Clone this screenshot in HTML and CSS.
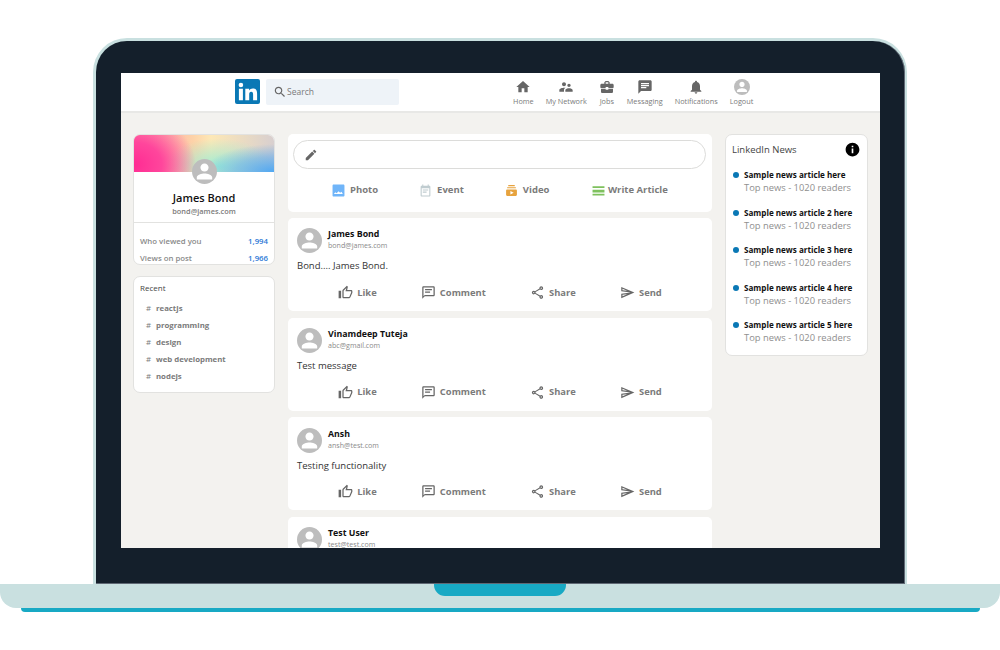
FILE: index.html
```html
<!DOCTYPE html>
<html lang="en">
<head>
<meta charset="utf-8">
<title>LinkedIn clone</title>
<link rel="stylesheet" href="styles.css">
</head>
<body>
<svg class="defs" width="0" height="0" aria-hidden="true">
  <symbol id="i-home" viewBox="0 0 24 24"><path d="M10 20v-6h4v6h5v-8h3L12 3 2 12h3v8z"/></symbol>
  <symbol id="i-net" viewBox="0 0 24 24"><path d="M16.5 12c1.38 0 2.49-1.12 2.49-2.5S17.88 7 16.5 7 14 8.12 14 9.5s1.12 2.5 2.5 2.5zM9 11c1.66 0 2.99-1.34 2.99-3S10.66 5 9 5 6 6.34 6 8s1.34 3 3 3zm7.5 3c-1.83 0-5.5.92-5.5 2.75V19h11v-2.25c0-1.83-3.67-2.75-5.5-2.75zM9 13c-2.33 0-7 1.17-7 3.5V19h7v-2.25c0-.85.33-2.34 2.37-3.47C10.5 13.1 9.66 13 9 13z"/></symbol>
  <symbol id="i-jobs" viewBox="0 0 24 24"><path d="M10 16v-1H3.01L3 19c0 1.11.89 2 2 2h14c1.11 0 2-.89 2-2v-4h-7v1h-4zm10-9h-4.01V5l-2-2h-4l-2 2v2H4c-1.1 0-2 .9-2 2v3c0 1.11.89 2 2 2h6v-2h4v2h6c1.1 0 2-.9 2-2V9c0-1.1-.9-2-2-2zm-6 0h-4V5h4v2z"/></symbol>
  <symbol id="i-chat" viewBox="0 0 24 24"><path d="M20 2H4c-1.1 0-1.99.9-1.99 2L2 22l4-4h14c1.1 0 2-.9 2-2V4c0-1.1-.9-2-2-2zM6 9h12v2H6V9zm8 5H6v-2h8v2zm4-6H6V6h12v2z"/></symbol>
  <symbol id="i-bell" viewBox="0 0 24 24"><path d="M12 22c1.1 0 2-.9 2-2h-4c0 1.1.89 2 2 2zm6-6v-5c0-3.07-1.64-5.64-4.5-6.32V4c0-.83-.67-1.5-1.5-1.5s-1.5.67-1.5 1.5v.68C7.63 5.36 6 7.92 6 11v5l-2 2v1h16v-1l-2-2z"/></symbol>
  <symbol id="i-avatar" viewBox="0 0 24 24"><circle cx="12" cy="12" r="12" fill="#bdbdbd"/><path fill="#fff" d="M12 12c2.21 0 3.9-1.7 3.9-3.9S14.2 4.2 12 4.2 8.1 5.9 8.1 8.1 9.8 12 12 12zm0 1.9c-2.6 0-7.4 1.3-7.4 3.6V19.6h14.8v-2.1c0-2.3-4.8-3.6-7.4-3.6z"/></symbol>
  <symbol id="i-search" viewBox="0 0 24 24"><path d="M15.5 14h-.79l-.28-.27C15.41 12.59 16 11.11 16 9.5 16 5.91 13.09 3 9.5 3S3 5.91 3 9.5 5.91 16 9.5 16c1.61 0 3.09-.59 4.23-1.57l.27.28v.79l5 4.99L20.49 19l-4.99-5zm-6 0C7.01 14 5 11.99 5 9.5S7.01 5 9.5 5 14 7.01 14 9.5 11.99 14 9.5 14z"/></symbol>
  <symbol id="i-pen" viewBox="0 0 24 24"><path d="M3 17.25V21h3.75L17.81 9.94l-3.75-3.75L3 17.25zM20.71 7.04c.39-.39.39-1.02 0-1.41l-2.34-2.34c-.39-.39-1.02-.39-1.41 0l-1.83 1.83 3.75 3.75 1.83-1.83z"/></symbol>
  <symbol id="i-photo" viewBox="0 0 24 24"><path d="M23 21V3c0-1.100-.9-2-2-2H3C1.900 1 1 1.900 1 3v18c0 1.100.9 2 2 2h18c1.100 0 2-.9 2-2zM6 15l2.500 2 3.500-3.500 3 2.500 2.500-1.500 2.500 4H3.500z"/></symbol>
  <symbol id="i-event" viewBox="0 0 24 24"><path d="M17 10H7v2h10v-2zm2-7h-1V1h-2v2H8V1H6v2H5c-1.11 0-1.99.9-1.99 2L3 21c0 1.100.89 2 2 2h14c1.100 0 2-.9 2-2V5c0-1.100-.9-2-2-2zm0 18H5V8h14v13zm-5-7H7v2h7v-2z"/></symbol>
  <symbol id="i-video" viewBox="0 0 24 24"><path d="M20 8H4V6h16v2zm-2-6H6v2h12V2zm4 10v8c0 1.100-.9 2-2 2H4c-1.100 0-2-.9-2-2v-8c0-1.100.9-2 2-2h16c1.100 0 2 .9 2 2zm-6 4l-6-3.270v6.530L16 16z"/></symbol>
  <symbol id="i-article" viewBox="0 0 24 24"><path d="M1 18h22v3H1zm0-7.500h22v5H1zM1 4h22v3.500H1z"/></symbol>
  <symbol id="i-like" viewBox="0 0 24 24"><path d="M9 21h9c.83 0 1.54-.5 1.84-1.22l3.02-7.05c.09-.23.14-.47.14-.73v-2c0-1.1-.9-2-2-2h-6.31l.95-4.57.03-.32c0-.41-.17-.79-.44-1.06L14.17 1 7.58 7.59C7.22 7.95 7 8.45 7 9v10c0 1.1.9 2 2 2zM9 9l4.34-4.34L12 10h9v2l-3 7H9V9zM1 9h4v12H1z"/></symbol>
  <symbol id="i-comment" viewBox="0 0 24 24"><path d="M20 2H4c-1.1 0-2 .9-2 2v18l4-4h14c1.1 0 2-.9 2-2V4c0-1.1-.9-2-2-2zm0 14H6l-2 2V4h16v12zM6.500 6.500h11v2h-11zm0 4h8v2h-8z"/></symbol>
  <symbol id="i-share" viewBox="0 0 24 24"><path d="M18 16.08c-.76 0-1.44.3-1.96.77L8.91 12.7c.05-.23.09-.46.09-.7s-.04-.47-.09-.7l7.05-4.11c.54.5 1.25.81 2.04.81 1.66 0 3-1.34 3-3s-1.34-3-3-3-3 1.34-3 3c0 .24.04.47.09.7L8.04 9.81C7.5 9.31 6.79 9 6 9c-1.66 0-3 1.34-3 3s1.34 3 3 3c.79 0 1.5-.31 2.04-.81l7.12 4.16c-.05.21-.08.43-.08.65 0 1.61 1.31 2.92 2.92 2.92s2.92-1.31 2.92-2.92-1.31-2.92-2.92-2.92zM18 4c.55 0 1 .45 1 1s-.45 1-1 1-1-.45-1-1 .45-1 1-1zM6 13c-.55 0-1-.45-1-1s.45-1 1-1 1 .45 1 1-.45 1-1 1zm12 7.020c-.55 0-1-.45-1-1s.45-1 1-1 1 .45 1 1-.45 1-1 1z"/></symbol>
  <symbol id="i-send" viewBox="0 0 24 24"><path d="M4.010 6.030l7.510 3.220-7.520-1 .01-2.220m7.500 8.720L4 17.970v-2.220l7.510-1M2.010 3L2 10l15 2-15 2 .01 7L23 12 2.010 3z"/></symbol>
  <symbol id="i-info" viewBox="0 0 24 24"><path d="M12 1C5.930 1 1 5.930 1 12s4.930 11 11 11 11-4.930 11-11S18.070 1 12 1zm1.300 17h-2.600v-7.500h2.600V18zm0-9.500h-2.600V6h2.600v2.500z"/></symbol>
</svg>

<div class="stage">
  <div class="lid">
    <div class="screen">
      <header class="topbar">
        <svg class="logo" viewBox="0 0 25 25" aria-label="LinkedIn">
          <rect width="25" height="25" rx="2" fill="#0a78b5"/>
          <circle cx="5.900" cy="6" r="2.300" fill="#fff"/>
          <path fill="#fff" d="M3.900 9.800h4v11.400h-4zM10.300 9.800h3.800v1.600c.7-1.100 2-1.900 3.700-1.900 3.300 0 4.300 2.100 4.300 5.200v6.500h-4v-5.700c0-1.500-.4-2.700-1.900-2.700s-2 1.100-2 2.700v5.700h-3.900z"/>
        </svg>
        <div class="search">
          <svg class="search-icon"><use href="#i-search"/></svg>
          <span>Search</span>
        </div>
        <nav class="nav">
          <a class="nav-item"><svg class="nav-icon"><use href="#i-home"/></svg><span>Home</span></a>
          <a class="nav-item"><svg class="nav-icon"><use href="#i-net"/></svg><span>My Network</span></a>
          <a class="nav-item"><svg class="nav-icon"><use href="#i-jobs"/></svg><span>Jobs</span></a>
          <a class="nav-item"><svg class="nav-icon"><use href="#i-chat"/></svg><span>Messaging</span></a>
          <a class="nav-item"><svg class="nav-icon"><use href="#i-bell"/></svg><span>Notifications</span></a>
          <a class="nav-item"><svg class="nav-icon"><use href="#i-avatar"/></svg><span>Logout</span></a>
        </nav>
      </header>

      <div class="content">
        <aside class="left">
          <section class="card profile">
            <div class="banner"></div>
            <svg class="profile-avatar"><use href="#i-avatar"/></svg>
            <h2 class="profile-name">James Bond</h2>
            <p class="profile-mail">bond@james.com</p>
            <div class="stats">
              <div class="stat"><span>Who viewed you</span><b>1,994</b></div>
              <div class="stat"><span>Views on post</span><b>1,966</b></div>
            </div>
          </section>
          <section class="card recent">
            <p class="recent-title">Recent</p>
            <div class="tag"><i>#</i><span>reactjs</span></div>
            <div class="tag"><i>#</i><span>programming</span></div>
            <div class="tag"><i>#</i><span>design</span></div>
            <div class="tag"><i>#</i><span>web development</span></div>
            <div class="tag"><i>#</i><span>nodejs</span></div>
          </section>
        </aside>

        <main class="feed">
          <section class="panel composer">
            <div class="pill"><svg class="pen"><use href="#i-pen"/></svg></div>
            <div class="options">
              <div class="option"><svg class="blue"><use href="#i-photo"/></svg><span>Photo</span></div>
              <div class="option"><svg class="slate"><use href="#i-event"/></svg><span>Event</span></div>
              <div class="option"><svg class="orange"><use href="#i-video"/></svg><span>Video</span></div>
              <div class="option"><svg class="green"><use href="#i-article"/></svg><span>Write Article</span></div>
            </div>
          </section>

          <article class="panel post">
            <div class="post-head"><svg class="post-avatar"><use href="#i-avatar"/></svg><div><h3>James Bond</h3><p>bond@james.com</p></div></div>
            <p class="post-text">Bond.... James Bond.</p>
            <div class="actions">
              <div class="action"><svg><use href="#i-like"/></svg><span>Like</span></div>
              <div class="action"><svg><use href="#i-comment"/></svg><span>Comment</span></div>
              <div class="action"><svg><use href="#i-share"/></svg><span>Share</span></div>
              <div class="action"><svg><use href="#i-send"/></svg><span>Send</span></div>
            </div>
          </article>

          <article class="panel post">
            <div class="post-head"><svg class="post-avatar"><use href="#i-avatar"/></svg><div><h3>Vinamdeep Tuteja</h3><p>abc@gmail.com</p></div></div>
            <p class="post-text">Test message</p>
            <div class="actions">
              <div class="action"><svg><use href="#i-like"/></svg><span>Like</span></div>
              <div class="action"><svg><use href="#i-comment"/></svg><span>Comment</span></div>
              <div class="action"><svg><use href="#i-share"/></svg><span>Share</span></div>
              <div class="action"><svg><use href="#i-send"/></svg><span>Send</span></div>
            </div>
          </article>

          <article class="panel post">
            <div class="post-head"><svg class="post-avatar"><use href="#i-avatar"/></svg><div><h3>Ansh</h3><p>ansh@test.com</p></div></div>
            <p class="post-text">Testing functionality</p>
            <div class="actions">
              <div class="action"><svg><use href="#i-like"/></svg><span>Like</span></div>
              <div class="action"><svg><use href="#i-comment"/></svg><span>Comment</span></div>
              <div class="action"><svg><use href="#i-share"/></svg><span>Share</span></div>
              <div class="action"><svg><use href="#i-send"/></svg><span>Send</span></div>
            </div>
          </article>

          <article class="panel post">
            <div class="post-head"><svg class="post-avatar"><use href="#i-avatar"/></svg><div><h3>Test User</h3><p>test@test.com</p></div></div>
          </article>
        </main>

        <aside class="right">
          <section class="card news">
            <div class="news-head"><span>LinkedIn News</span><svg class="info"><use href="#i-info"/></svg></div>
            <div class="news-item"><h4>Sample news article here</h4><p>Top news - 1020 readers</p></div>
            <div class="news-item"><h4>Sample news article 2 here</h4><p>Top news - 1020 readers</p></div>
            <div class="news-item"><h4>Sample news article 3 here</h4><p>Top news - 1020 readers</p></div>
            <div class="news-item"><h4>Sample news article 4 here</h4><p>Top news - 1020 readers</p></div>
            <div class="news-item"><h4>Sample news article 5 here</h4><p>Top news - 1020 readers</p></div>
          </section>
        </aside>
      </div>
    </div>
  </div>
  <div class="base"><div class="notch"></div></div>
  <div class="lip"></div>
</div>
</body>
</html>
```

FILE: styles.css
```css
* { box-sizing: border-box; }
html, body { margin: 0; height: 100%; }
body { background: #fff; font-family: "Open Sans", "Liberation Sans", sans-serif; overflow: hidden; }
h2, h3, h4, p { margin: 0; }
.defs { display: block; height: 0; }

.stage { padding-top: 38px; }
.lid {
  width: 814px; height: 546px; margin-left: 93px;
  background: #141f2b;
  border: solid #c9e0e0; border-width: 3px 2px 0 3px;
  border-radius: 34px 34px 0 0;
  padding: 32px 0 0 25px;
  box-shadow: inset 0 -1px 0 #5f6874, inset -1px 0 0 #5f6874;
}
.screen { width: 759px; height: 475px; background: #f3f2ef; overflow: hidden; }
.base {
  height: 24px; background: #c9e0e0;
  border-radius: 0 0 16px 16px;
  display: flex; justify-content: center;
}
.notch { width: 132px; height: 12px; background: #18a9c4; border-radius: 0 0 11px 11px; }
.lip { width: 959px; height: 4px; margin-left: 21px; background: #18a9c4; border-radius: 0 0 4px 4px; }

.topbar {
  height: 40px; background: #fff;
  border-bottom: 2px solid #e8e8e6;
  padding: 6px 0 0 114px;
  display: flex; align-items: flex-start;
}
.logo { width: 25px; height: 25px; flex: none; }
.search {
  width: 133px; height: 26px; margin-left: 6px; margin-right: 114px;
  background: #eef3f8; border-radius: 2px;
  display: flex; align-items: center; gap: 0; padding: 0 0 1px 7px;
  font-size: 8.500px; color: #7a7a7a;
}
.search-icon { width: 14px; height: 14px; fill: #666; }
.nav { display: flex; gap: 12px; margin-top: -0.500px; }
.nav-item { display: flex; flex-direction: column; align-items: center; color: #7a7a7a; font-size: 7.300px; line-height: 10px; }
.nav-icon { width: 16px; height: 16px; fill: #666; margin-bottom: 1px; }

.content {
  padding: 21px 12px 0;
  display: grid; grid-template-columns: 142px 424px 143px; column-gap: 13px;
  align-items: start;
}
.card { background: #fff; border: 1px solid #e2e2e0; border-radius: 7px; overflow: hidden; }

.left { display: flex; flex-direction: column; gap: 11px; }
.profile { height: 131px; display: flex; flex-direction: column; align-items: center; position: relative; }
.banner {
  align-self: stretch; height: 37px; flex: none;
  background:
    radial-gradient(ellipse 62px 50px at 0 80%, #ff2b93 0%, #ff469c 45%, rgba(255,110,160,0) 100%),
    radial-gradient(ellipse 70px 28px at 100% 100%, #50a8f2 0%, rgba(90,170,240,.55) 55%, rgba(90,170,240,0) 100%),
    radial-gradient(ellipse 55px 28px at 60% 85%, #9eecd4 0%, rgba(150,235,215,0) 100%),
    linear-gradient(90deg, #ff92aa 0%, #fdd2a8 42%, #fde8b6 55%, #d8cfcf 100%);
}
.profile-avatar { width: 25px; height: 25px; flex: none; margin-top: -13px; position: relative; }
.profile-name { font-size: 11px; font-weight: 600; color: #111; line-height: 15px; margin-top: 6px; }
.profile-mail { font-size: 7.400px; font-weight: 600; color: #7b7b7b; line-height: 11px; margin-top: 1px; }
.stats { align-self: stretch; margin-top: 5px; border-top: 1px solid #e2e2e0; padding: 10px 6px 0 6px; }
.stat { display: flex; justify-content: space-between; height: 17px; line-height: 17px; font-size: 7.800px; font-weight: 600; color: #8a8a8a; }
.stat b { font-weight: 600; color: #2a78d6; }

.recent { height: 117px; padding: 4px 6px; }
.recent-title { font-size: 8px; line-height: 13px; color: #444; margin-bottom: 5px; }
.tag { display: flex; height: 17px; align-items: center; font-size: 7.800px; font-weight: 700; color: #7b7b7b; padding-left: 6px; }
.tag i { font-style: normal; font-weight: 400; width: 10px; }

.feed { display: flex; flex-direction: column; }
.panel { background: #fff; border-radius: 5px; }
.composer { height: 77.500px; padding: 6px 6px 0 5px; margin-bottom: 6.600px; flex: none; }
.pill { height: 29px; border: 1px solid #dcdcda; border-radius: 15px; display: flex; align-items: center; padding-left: 10px; }
.pen { width: 14px; height: 14px; fill: #666; }
.options { display: flex; gap: 41px; padding-left: 39px; margin-top: 14px; }
.option { display: flex; align-items: center; gap: 5px; font-size: 9.500px; font-weight: 700; color: #7b7b7b; line-height: 14px; }
.option:last-child { gap: 3px; margin-left: 1.500px; }
.option svg { width: 13px; height: 13px; }
.blue { fill: #70b5f9; }
.slate { fill: #c0ccd0; }
.orange { fill: #e7a33e; }
.green { fill: #7fc15e; }

.post { height: 93px; margin-bottom: 6.600px; padding: 10.400px 9px 0; flex: none; }
.post-head { display: flex; gap: 6px; }
.post-avatar { width: 25px; height: 25px; flex: none; }
.post-head h3 { font-size: 8.800px; font-weight: 700; color: #111; line-height: 12px; }
.post-head p { font-size: 7.100px; color: #8a8a8a; line-height: 10px; }
.post-text { font-size: 9.500px; color: #333; line-height: 14px; margin-top: 6px; }
.actions { display: flex; justify-content: space-evenly; margin: 11.600px -3px 0; }
.action { display: flex; align-items: center; gap: 4px; font-size: 9.400px; font-weight: 700; color: #7b7b7b; line-height: 14px; }
.action svg { width: 15px; height: 15px; fill: #666; }

.news { height: 222px; padding: 0 7px 0 6px; }
.news-head { height: 28px; display: flex; justify-content: space-between; align-items: center; font-size: 9.500px; color: #444; margin-bottom: 4px; }
.info { width: 15px; height: 15px; fill: #000; }
.news-item { position: relative; height: 37.500px; padding: 2px 0 0 12px; }
.news-item::before { content: ""; position: absolute; left: 1px; top: 5px; width: 6px; height: 6px; border-radius: 50%; background: #0a78b5; }
.news-item h4 { font-size: 8.100px; font-weight: 700; color: #111; line-height: 12px; white-space: nowrap; }
.news-item p { font-size: 9.400px; color: #8f8f8f; line-height: 13px; white-space: nowrap; }
```
